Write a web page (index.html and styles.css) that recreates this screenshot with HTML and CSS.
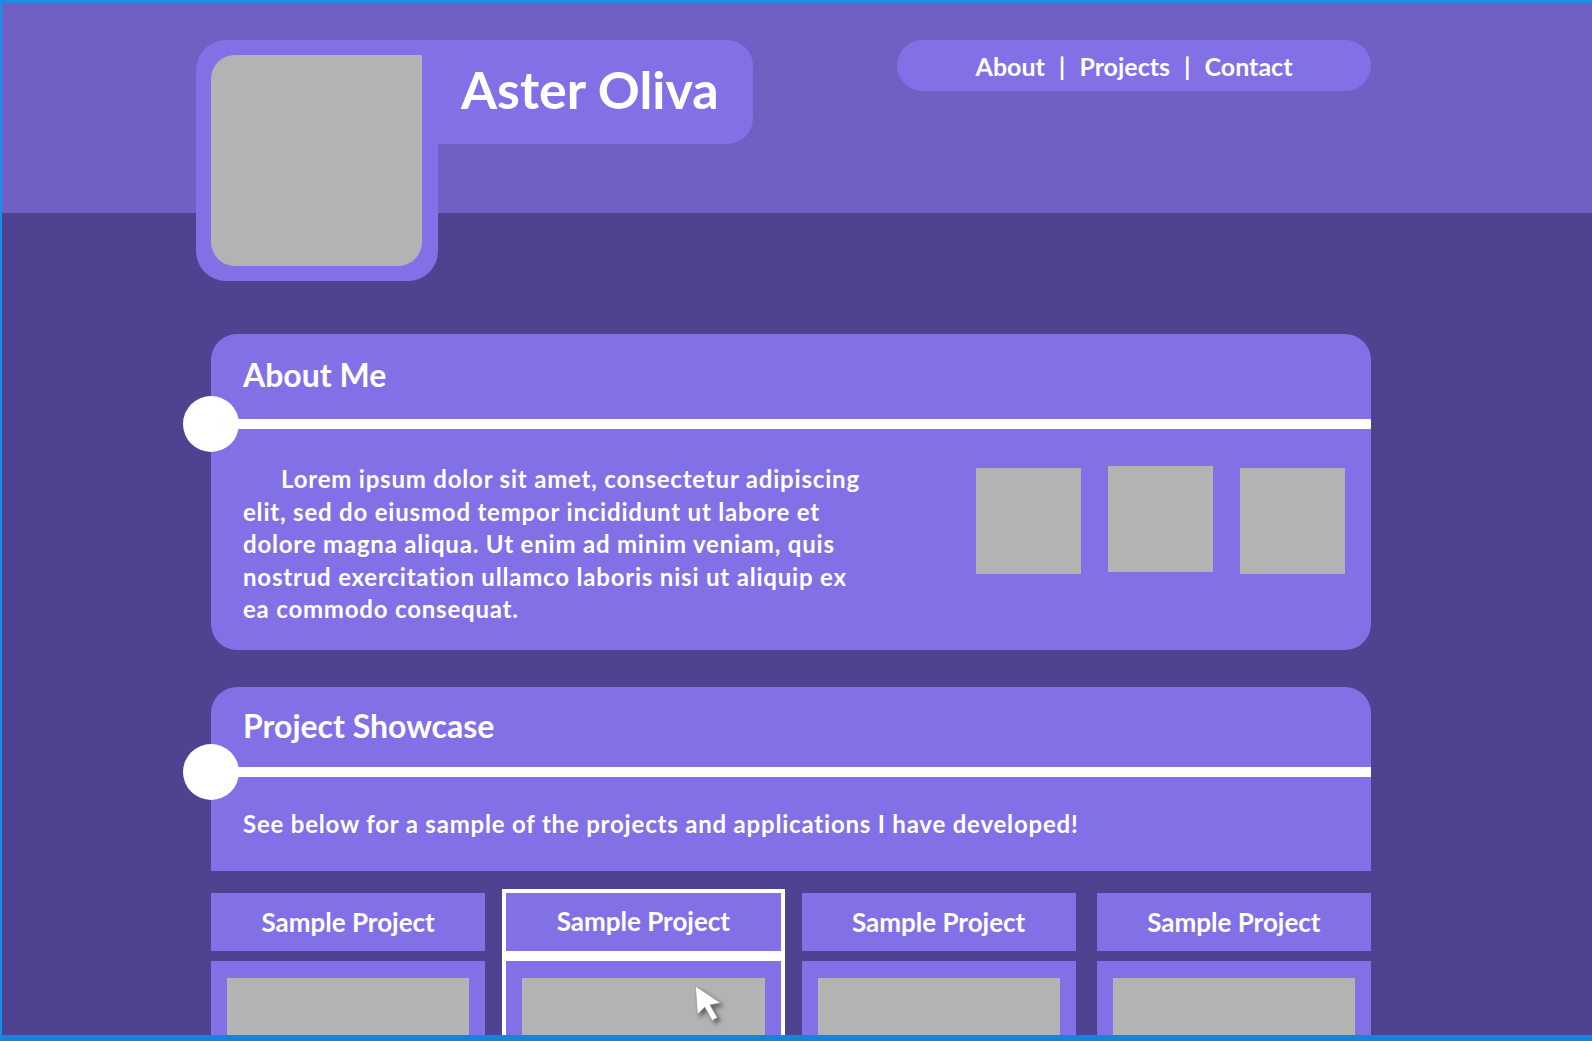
FILE: index.html
```html
<!DOCTYPE html>
<html lang="en">
<head>
<meta charset="utf-8">
<title>Aster Oliva</title>
<link rel="stylesheet" href="styles.css">
</head>
<body>
<header class="band">
  <div class="band-inner">
    <div class="brand">
      <div class="avatar"><div class="photo"></div></div>
      <div class="name">Aster Oliva</div>
    </div>
    <nav class="nav">
      <a href="#about">About</a><span class="sep">|</span><a href="#projects">Projects</a><span class="sep">|</span><a href="#contact">Contact</a>
    </nav>
  </div>
</header>

<main class="main">
  <section class="card about" id="about">
    <h2 class="card-title">About Me</h2>
    <div class="rule"><span class="dot"></span></div>
    <div class="about-body">
      <p class="about-text">Lorem ipsum dolor sit amet, consectetur adipiscing elit, sed do eiusmod tempor incididunt ut labore et dolore magna aliqua. Ut enim ad minim veniam, quis nostrud exercitation ullamco laboris nisi ut aliquip ex ea commodo consequat.</p>
      <div class="gallery">
        <div class="thumb"></div>
        <div class="thumb thumb-up"></div>
        <div class="thumb"></div>
      </div>
    </div>
  </section>

  <section class="card showcase" id="projects">
    <h2 class="card-title">Project Showcase</h2>
    <div class="rule"><span class="dot"></span></div>
    <p class="showcase-text">See below for a sample of the projects and applications I have developed!</p>
  </section>

  <div class="projects">
    <div class="proj">
      <div class="proj-head">Sample Project</div>
      <div class="proj-body"><div class="proj-img"></div></div>
    </div>
    <div class="proj active">
      <div class="proj-head">Sample Project</div>
      <div class="proj-body"><div class="proj-img"></div></div>
      <svg class="cursor" width="36" height="44" viewBox="0 0 34 42" aria-hidden="true">
        <path d="M3 2 L5 29 L12 22 L19 35 L24 32 L17 20 L27 18 Z" fill="#ffffff" stroke="#9a9a9a" stroke-width="0.8" stroke-linejoin="round"/>
      </svg>
    </div>
    <div class="proj">
      <div class="proj-head">Sample Project</div>
      <div class="proj-body"><div class="proj-img"></div></div>
    </div>
    <div class="proj">
      <div class="proj-head">Sample Project</div>
      <div class="proj-body"><div class="proj-img"></div></div>
    </div>
  </div>
</main>

<div class="frame"></div>
</body>
</html>
```

FILE: styles.css
```css
html, body {
  margin: 0;
  padding: 0;
  height: 1041px;
  overflow: hidden;
}
body {
  background: #4d4390;
  font-family: "Lato", "Liberation Sans", sans-serif;
  font-weight: 700;
  color: #ffffff;
}

.frame {
  position: fixed;
  inset: 0;
  border-top: 3px solid #1b8ee8;
  border-left: 2px solid #1b8ee8;
  border-bottom: 6px solid #1784dc;
  pointer-events: none;
}

/* header band */
.band {
  height: 213px;
  background: #6f60c4;
}
.band-inner {
  display: flex;
  align-items: flex-start;
  padding: 40px 0 0 196px;
}
.brand {
  display: flex;
  align-items: flex-start;
}
.avatar {
  width: 242px;
  height: 241px;
  box-sizing: border-box;
  padding: 15px;
  background: #8271e6;
  border-radius: 30px 0 30px 30px;
  position: relative;
  z-index: 1;
}
.photo {
  width: 211px;
  height: 211px;
  background: #b3b3b3;
  border-radius: 24px 0 24px 24px;
}
.name {
  width: 315px;
  height: 104px;
  box-sizing: border-box;
  padding: 18px 0 0 23px;
  background: #8271e6;
  border-radius: 0 26px 26px 0;
  font-size: 52px;
  line-height: 1.2;
}
.nav {
  margin-left: 144px;
  width: 474px;
  height: 51px;
  background: #8271e6;
  border-radius: 26px;
  display: flex;
  align-items: center;
  justify-content: center;
  font-size: 25px;
}
.nav a {
  color: #ffffff;
  text-decoration: none;
}
.sep {
  margin: 0 14px;
}

/* main */
.main {
  width: 1160px;
  margin-left: 211px;
  padding-top: 121px;
}
.card {
  background: #8271e6;
  position: relative;
}
.card-title {
  margin: 0;
  padding-left: 32px;
  font-size: 32px;
  font-weight: 700;
  line-height: 1.2;
  box-sizing: border-box;
}
.rule {
  height: 10px;
  background: #ffffff;
  position: relative;
}
.dot {
  position: absolute;
  left: -28px;
  top: -23px;
  width: 56px;
  height: 56px;
  border-radius: 50%;
  background: #ffffff;
}

.about {
  height: 316px;
  border-radius: 26px;
}
.about .card-title {
  height: 85px;
  padding-top: 22px;
}
.about-body {
  display: flex;
  align-items: flex-start;
  padding: 0 26px 0 32px;
}
.about-text {
  margin: 34px 0 0;
  width: 632px;
  font-size: 24px;
  letter-spacing: 0.8px;
  line-height: 32.5px;
  text-indent: 38px;
}
.gallery {
  margin-left: auto;
  margin-top: 39px;
  display: flex;
  align-items: flex-start;
  gap: 27px;
}
.thumb {
  width: 105px;
  height: 106px;
  background: #b3b3b3;
}
.thumb-up {
  margin-top: -2px;
}

.showcase {
  margin-top: 37px;
  height: 184px;
  border-radius: 26px 26px 0 0;
}
.showcase .card-title {
  height: 80px;
  padding-top: 20px;
}
.showcase-text {
  margin: 31px 0 0;
  padding-left: 32px;
  font-size: 24px;
  letter-spacing: 0.8px;
  line-height: 32.5px;
}

/* projects */
.projects {
  margin-top: 22px;
  display: grid;
  grid-template-columns: repeat(4, 1fr);
  gap: 21px;
}
.proj {
  display: flex;
  flex-direction: column;
  gap: 10px;
  position: relative;
}
.proj-head {
  height: 58px;
  background: #8271e6;
  display: flex;
  align-items: center;
  justify-content: center;
  font-size: 26px;
}
.proj-body {
  background: #8271e6;
  height: 220px;
  padding: 17px 16px 0;
}
.proj-img {
  height: 180px;
  background: #b3b3b3;
}
.active {
  background: #ffffff;
  outline: 4px solid #ffffff;
}
.active .proj-head {
  padding-bottom: 3px;
  box-sizing: border-box;
}
.cursor {
  position: absolute;
  left: 186px;
  top: 91px;
  filter: drop-shadow(3px 3px 2px rgba(0, 0, 0, 0.45));
}
```
